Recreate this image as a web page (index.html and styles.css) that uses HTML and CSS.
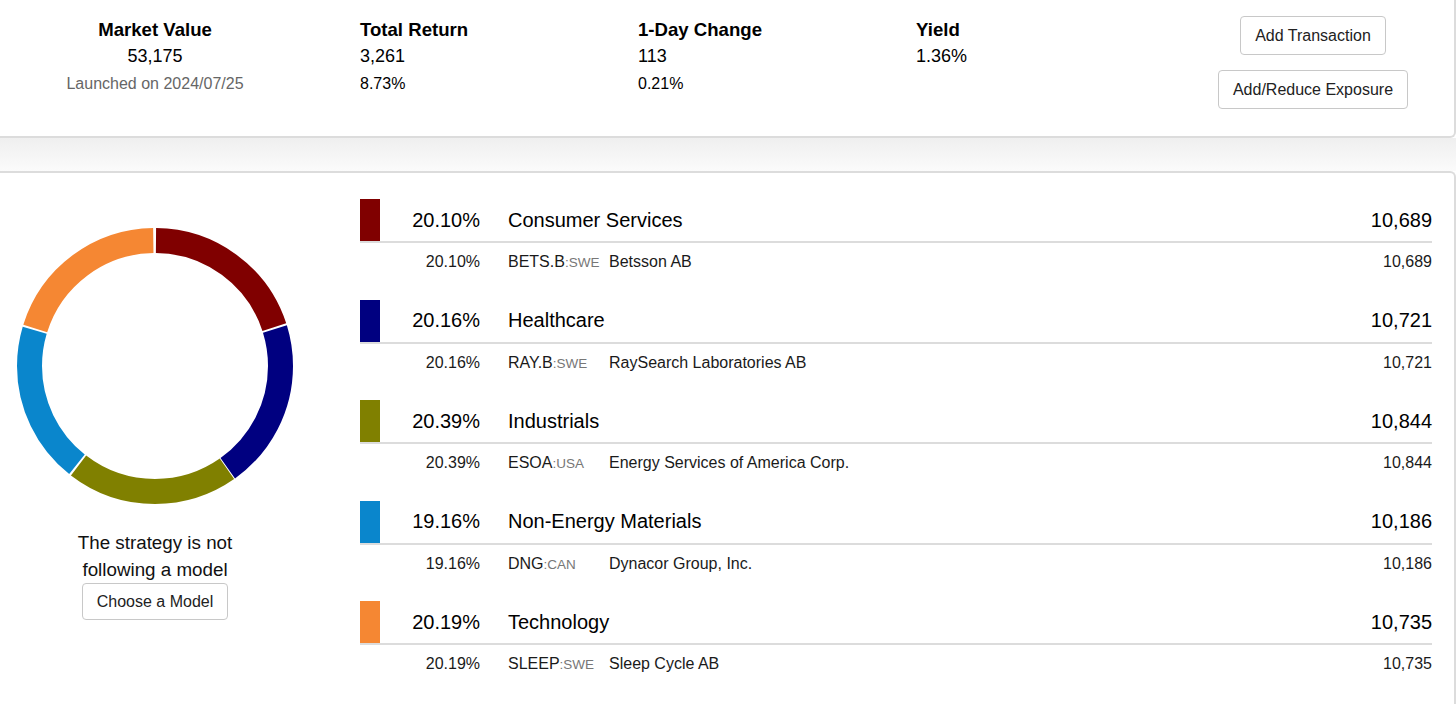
FILE: index.html
```html
<!DOCTYPE html>
<html lang="en">
<head>
<meta charset="utf-8">
<title>Strategy</title>
<link rel="stylesheet" href="styles.css">
</head>
<body>
<div class="summary">
  <div class="stat stat-main">
    <div class="stat-title">Market Value</div>
    <div class="stat-value">53,175</div>
    <div class="stat-sub muted">Launched on 2024/07/25</div>
  </div>
  <div class="stat">
    <div class="stat-title">Total Return</div>
    <div class="stat-value">3,261</div>
    <div class="stat-sub">8.73%</div>
  </div>
  <div class="stat">
    <div class="stat-title">1-Day Change</div>
    <div class="stat-value">113</div>
    <div class="stat-sub">0.21%</div>
  </div>
  <div class="stat">
    <div class="stat-title">Yield</div>
    <div class="stat-value">1.36%</div>
  </div>
  <div class="actions">
    <button class="btn">Add Transaction</button>
    <button class="btn">Add/Reduce Exposure</button>
  </div>
</div>
<div class="gap"></div>
<div class="holdings">
  <div class="chart-col">
    <svg class="donut" width="276" height="276" viewBox="0 0 276 276">
      <g transform="rotate(-90 138 138)" fill="none" stroke-width="25">
        <circle cx="138" cy="138" r="125.5" stroke="#800000" stroke-dasharray="156.5 800" stroke-dashoffset="-1"></circle>
        <circle cx="138" cy="138" r="125.5" stroke="#000080" stroke-dasharray="157.0 800" stroke-dashoffset="-159.5"></circle>
        <circle cx="138" cy="138" r="125.5" stroke="#808000" stroke-dasharray="158.8 800" stroke-dashoffset="-317.5"></circle>
        <circle cx="138" cy="138" r="125.5" stroke="#0a86cc" stroke-dasharray="149.1 800" stroke-dashoffset="-478.3"></circle>
        <circle cx="138" cy="138" r="125.5" stroke="#f58733" stroke-dasharray="157.2 800" stroke-dashoffset="-629.3"></circle>
      </g>
    </svg>
    <p class="caption">The strategy is not following a model</p>
    <button class="btn">Choose a Model</button>
  </div>
  <div class="sectors">
    <div class="group">
      <div class="sector-row">
        <span class="swatch c-red"></span>
        <span class="pct">20.10%</span>
        <span class="label">Consumer Services</span>
        <span class="value">10,689</span>
      </div>
      <div class="holding-row">
        <span class="spacer"></span>
        <span class="pct">20.10%</span>
        <span class="ticker">BETS.B<span class="exch">:SWE</span></span>
        <span class="name">Betsson AB</span>
        <span class="value">10,689</span>
      </div>
    </div>
    <div class="group">
      <div class="sector-row">
        <span class="swatch c-navy"></span>
        <span class="pct">20.16%</span>
        <span class="label">Healthcare</span>
        <span class="value">10,721</span>
      </div>
      <div class="holding-row">
        <span class="spacer"></span>
        <span class="pct">20.16%</span>
        <span class="ticker">RAY.B<span class="exch">:SWE</span></span>
        <span class="name">RaySearch Laboratories AB</span>
        <span class="value">10,721</span>
      </div>
    </div>
    <div class="group">
      <div class="sector-row">
        <span class="swatch c-olive"></span>
        <span class="pct">20.39%</span>
        <span class="label">Industrials</span>
        <span class="value">10,844</span>
      </div>
      <div class="holding-row">
        <span class="spacer"></span>
        <span class="pct">20.39%</span>
        <span class="ticker">ESOA<span class="exch">:USA</span></span>
        <span class="name">Energy Services of America Corp.</span>
        <span class="value">10,844</span>
      </div>
    </div>
    <div class="group">
      <div class="sector-row">
        <span class="swatch c-blue"></span>
        <span class="pct">19.16%</span>
        <span class="label">Non-Energy Materials</span>
        <span class="value">10,186</span>
      </div>
      <div class="holding-row">
        <span class="spacer"></span>
        <span class="pct">19.16%</span>
        <span class="ticker">DNG<span class="exch">:CAN</span></span>
        <span class="name">Dynacor Group, Inc.</span>
        <span class="value">10,186</span>
      </div>
    </div>
    <div class="group">
      <div class="sector-row">
        <span class="swatch c-orange"></span>
        <span class="pct">20.19%</span>
        <span class="label">Technology</span>
        <span class="value">10,735</span>
      </div>
      <div class="holding-row">
        <span class="spacer"></span>
        <span class="pct">20.19%</span>
        <span class="ticker">SLEEP<span class="exch">:SWE</span></span>
        <span class="name">Sleep Cycle AB</span>
        <span class="value">10,735</span>
      </div>
    </div>
  </div>
</div>
</body>
</html>
```

FILE: styles.css
```css
* { box-sizing: border-box; }

html, body {
  margin: 0;
  padding: 0;
  background: #ffffff;
  font-family: "Liberation Sans", Arial, Helvetica, sans-serif;
  color: #111;
  overflow: hidden;
}

.summary {
  height: 138px;
  padding-top: 16px;
  display: grid;
  grid-template-columns: 360px 278px 278px 278px 1fr;
  background: #fff;
  border-bottom: 2px solid #dcdcdc;
  border-right: 2px solid #dcdcdc;
  border-bottom-right-radius: 6px;
}

.stat { line-height: 27px; }

.stat-main {
  padding-right: 50px;
  text-align: center;
}

.stat-title {
  font-size: 18.6px;
  font-weight: bold;
  color: #000;
}

.stat-value {
  font-size: 18px;
  color: #000;
}

.stat-sub {
  font-size: 16px;
  line-height: 28px;
  color: #000;
}

.muted { color: #666; }

.actions {
  display: flex;
  flex-direction: column;
  align-items: center;
  gap: 15px;
  padding-right: 22px;
}

.btn {
  font-family: "Liberation Sans", Arial, Helvetica, sans-serif;
  font-size: 16px;
  line-height: 21px;
  padding: 8px 14px;
  color: #222;
  background: #fff;
  border: 1px solid #c8c8c8;
  border-radius: 4px;
}

.gap {
  height: 33px;
  background: linear-gradient(#efefef, #fbfbfb);
}

.holdings {
  display: flex;
  border-top: 2px solid #dcdcdc;
  border-right: 2px solid #dcdcdc;
  border-top-right-radius: 6px;
  min-height: 533px;
  background: #fff;
}

.chart-col {
  width: 310px;
  margin-right: 50px;
  padding-top: 55px;
  display: flex;
  flex-direction: column;
  align-items: center;
}

.donut { display: block; }

.caption {
  margin: 25px 0 0;
  width: 180px;
  text-align: center;
  font-size: 18.8px;
  line-height: 27px;
  color: #111;
}

.chart-col .btn { padding: 7px 14px; }

.sectors {
  flex: 1;
  padding-top: 26px;
  padding-right: 22px;
}

.group { margin-bottom: 18.5px; }

.group:last-child { margin-bottom: 0; }

.sector-row {
  display: flex;
  align-items: center;
  height: 44px;
  border-bottom: 2px solid #dcdcdc;
  font-size: 20px;
  color: #000;
}

.swatch {
  width: 20px;
  height: 42px;
  flex: none;
}

.c-red { background: #800000; }
.c-navy { background: #000080; }
.c-olive { background: #808000; }
.c-blue { background: #0a86cc; }
.c-orange { background: #f58733; }

.pct {
  width: 100px;
  flex: none;
  text-align: right;
}

.label {
  flex: 1;
  margin-left: 28px;
}

.value { text-align: right; }

.holding-row {
  display: flex;
  align-items: center;
  height: 38px;
  font-size: 16px;
  color: #1a1a1a;
}

.spacer { width: 20px; flex: none; }

.ticker {
  width: 101px;
  flex: none;
  margin-left: 28px;
}

.exch {
  font-size: 13.5px;
  color: #777;
}

.name { flex: 1; }
```
